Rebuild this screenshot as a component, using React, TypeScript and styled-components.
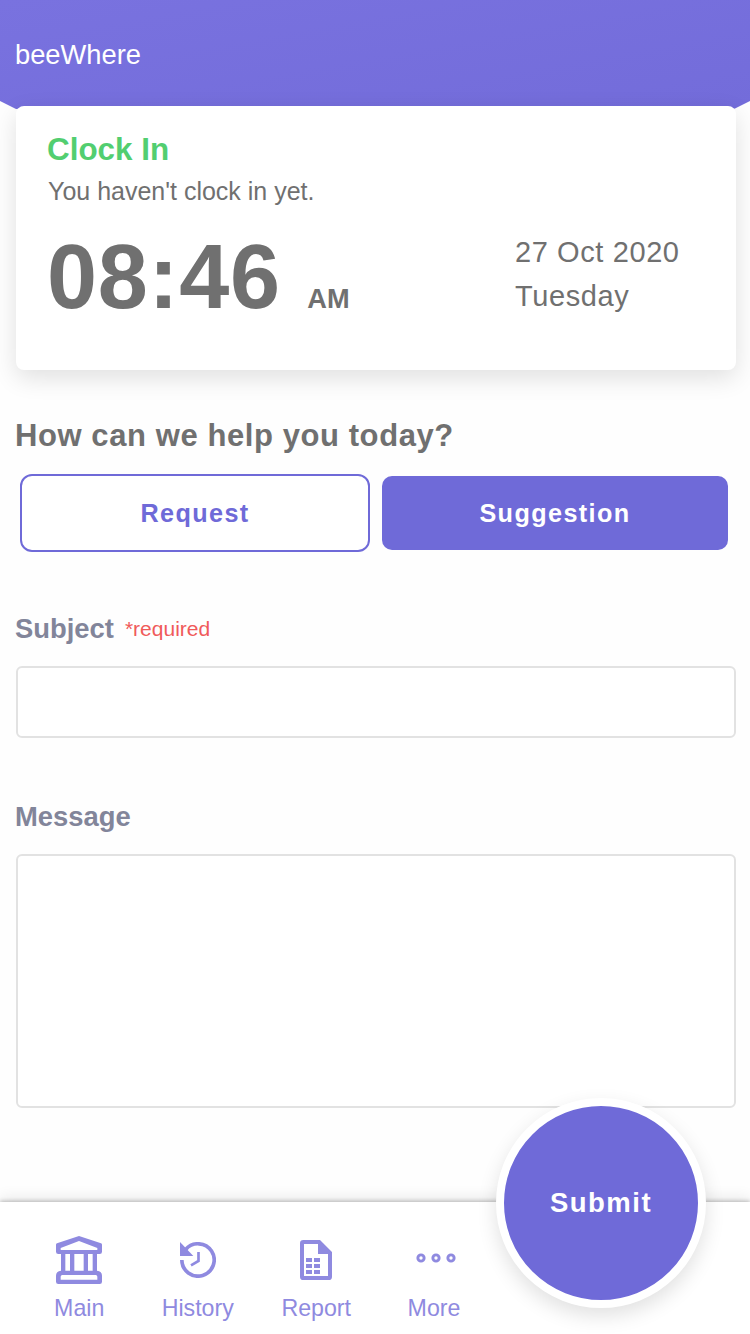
import React from "react";
import styled, { createGlobalStyle } from "styled-components";

const PRIMARY = "#6f6ad8";
const NAV = "#8f8ae0";
const TEXT = "#707070";

const GlobalStyle = createGlobalStyle`
  * { box-sizing: border-box; }
  body {
    margin: 0;
    background: #fefefe;
    font-family: "Liberation Sans", Arial, Helvetica, sans-serif;
    color: ${TEXT};
  }
  button, input, textarea { font-family: inherit; margin: 0; outline: none; }
`;

const Page = styled.div`
  width: 750px;
  height: 1334px;
  display: flex;
  flex-direction: column;
  overflow: hidden;
`;

const Header = styled.header`
  height: 109px;
  flex: none;
  padding: 38px 15px 0;
  background: linear-gradient(170deg, #7972df 0%, #736cda 100%);
  clip-path: polygon(0 0, 100% 0, 100% 101px, 734px 109px, 16px 109px, 0 101px);
`;

const Brand = styled.h1`
  margin: 0;
  font-size: 27.3px;
  line-height: 34px;
  font-weight: 400;
  color: #fff;
`;

const Content = styled.main`
  flex: 1;
  display: flex;
  flex-direction: column;
  padding: 0 14px 0 16px;
`;

const Card = styled.section`
  height: 264px;
  margin-top: -3px;
  padding: 26px 32px 0;
  border-radius: 8px;
  background: #fff;
  box-shadow: 0 8px 24px rgba(0, 0, 0, 0.12);
  z-index: 1;
`;

const Status = styled.h2`
  margin: 0 0 0 -1px;
  font-size: 31.4px;
  line-height: 36px;
  color: #52ce70;
`;

const Hint = styled.p`
  margin: 8px 0 0;
  font-size: 25px;
  line-height: 30px;
`;

const ClockRow = styled.div`
  display: flex;
  justify-content: space-between;
  margin-top: 21px;
`;

const Time = styled.div`
  display: flex;
  align-items: baseline;
  margin-left: -1px;
  font-weight: 700;
  font-size: 90px;
  line-height: 100px;
  letter-spacing: 0.7px;
`;

const Meridiem = styled.span`
  margin-left: 26.5px;
  font-size: 27.2px;
  letter-spacing: 0.2px;
`;

const DateBlock = styled.div`
  width: 189px;
  margin-top: 3px;
  font-size: 29px;
  line-height: 44px;
  letter-spacing: 0.6px;
`;

const Question = styled.h2`
  margin: 48px 0 0 -1px;
  font-size: 31px;
  line-height: 36px;
  letter-spacing: 0.58px;
`;

const Choices = styled.div`
  display: flex;
  align-items: center;
  gap: 12px;
  margin: 20px 8px 0 4px;
`;

const Choice = styled.button<{ $filled?: boolean }>`
  width: ${(p) => (p.$filled ? 346 : 350)}px;
  height: ${(p) => (p.$filled ? 74 : 78)}px;
  padding: 0;
  border: ${(p) => (p.$filled ? "0" : `2px solid ${PRIMARY}`)};
  border-radius: ${(p) => (p.$filled ? 10 : 12)}px;
  background: ${(p) => (p.$filled ? PRIMARY : "#fff")};
  color: ${(p) => (p.$filled ? "#fff" : PRIMARY)};
  font-size: 25.2px;
  font-weight: 700;
  letter-spacing: 1.4px;
`;

const Label = styled.label<{ $top: number }>`
  display: flex;
  align-items: center;
  gap: 11px;
  margin: ${(p) => p.$top}px 0 21px -1px;
  font-size: 27.4px;
  line-height: 32px;
  font-weight: 700;
  color: #82859a;
`;

const Required = styled.span`
  font-size: 21px;
  font-weight: 400;
  color: #f05a5a;
`;

const Subject = styled.input`
  width: 720px;
  height: 72px;
  padding: 0 16px;
  border: 2px solid #e2e2e2;
  border-radius: 6px;
  background: #fff;
  font-size: 27px;
`;

const Message = styled.textarea`
  width: 720px;
  height: 254px;
  padding: 16px;
  border: 2px solid #e2e2e2;
  border-radius: 6px;
  background: #fff;
  font-size: 27px;
  resize: none;
`;

const BottomBar = styled.nav`
  position: relative;
  flex: none;
  height: 132px;
  padding: 32px 0 0 20px;
  display: flex;
  background: #fff;
  box-shadow: 0 -1px 4px rgba(0, 0, 0, 0.24), 0 -4px 14px rgba(0, 0, 0, 0.09);
`;

const Tab = styled.a`
  width: 118.5px;
  display: flex;
  flex-direction: column;
  align-items: center;
  color: ${NAV};
  font-size: 23.2px;
  line-height: 28px;

  &:nth-of-type(4) { width: 117px; }
`;

const IconSlot = styled.span`
  height: 52px;
  margin-bottom: 8px;
  display: flex;
  align-items: center;
  justify-content: center;
  svg { display: block; }
`;

const Submit = styled.button`
  position: absolute;
  right: 44px;
  bottom: 26px;
  width: 210px;
  height: 210px;
  padding: 0;
  border: 8px solid #fff;
  border-radius: 50%;
  background: ${PRIMARY};
  color: #fff;
  font-size: 27.5px;
  font-weight: 700;
  letter-spacing: 1.5px;
  box-shadow: 0 8px 20px rgba(0, 0, 0, 0.12);
`;

const BankIcon = () => (
  <svg width="46" height="48" viewBox="48 33 138 144" fill={NAV}>
    <path
      fillRule="evenodd"
      d="M48 59Q48 56 51 55L117 33L183 55Q186 56 186 59V80Q186 87 179 87H171V137Q186 139 186 152V170Q186 177 179 177H55Q48 177 48 170V152Q48 139 63 137V87H55Q48 87 48 80ZM62 69V75H172V69L117 48ZM76 87V137H90V87ZM103 87V137H131V87ZM144 87V137H158V87ZM62 155V164H172V155Q172 150 167 150H67Q62 150 62 155Z"
    />
  </svg>
);

const HistoryIcon = () => (
  <svg width="36" height="36" viewBox="420 51 108 108">
    <path d="M425.500 105A48.500 48.500 0 1 0 437 73.500" fill="none" stroke={NAV} strokeWidth="11" />
    <path d="M420 51V93H460Z" fill={NAV} />
    <path d="M475.500 81V108L453 121" fill="none" stroke={NAV} strokeWidth="8" />
  </svg>
);

const ReportIcon = () => (
  <svg width="32" height="40" viewBox="120 45 96 120" fill={NAV}>
    <path
      fillRule="evenodd"
      d="M130 45H180L216 81V155Q216 165 206 165H130Q120 165 120 155V55Q120 45 130 45ZM132 57V153H204V87H174V57Z"
    />
    <path d="M138 99h18v12h-18zM162 99h18v12h-18zM138 117h18v12h-18zM162 117h18v12h-18zM138 135h18v12h-18zM162 135h18v12h-18z" />
  </svg>
);

const MoreIcon = () => (
  <svg width="40" height="10" viewBox="0 0 40 10" fill="none" stroke={NAV} strokeWidth="2.900">
    <circle cx="5" cy="5" r="3.150" />
    <circle cx="20" cy="5" r="3.150" />
    <circle cx="35" cy="5" r="3.150" />
  </svg>
);

const MoreSlot = styled(IconSlot)`
  padding: 0 0 4px 4px;
`;

export default function App() {
  return (
    <>
      <GlobalStyle />
      <Page>
        <Header>
          <Brand>beeWhere</Brand>
        </Header>
        <Content>
          <Card>
            <Status>Clock In</Status>
            <Hint>You haven't clock in yet.</Hint>
            <ClockRow>
              <Time>
                08:46<Meridiem>AM</Meridiem>
              </Time>
              <DateBlock>
                <div>27 Oct 2020</div>
                <div>Tuesday</div>
              </DateBlock>
            </ClockRow>
          </Card>
          <Question>How can we help you today?</Question>
          <Choices>
            <Choice>Request</Choice>
            <Choice $filled>Suggestion</Choice>
          </Choices>
          <Label $top={61} htmlFor="subject">
            Subject <Required>*required</Required>
          </Label>
          <Subject id="subject" />
          <Label $top={63} htmlFor="message">
            Message
          </Label>
          <Message id="message" />
        </Content>
        <BottomBar>
          <Tab>
            <IconSlot><BankIcon /></IconSlot>
            Main
          </Tab>
          <Tab>
            <IconSlot><HistoryIcon /></IconSlot>
            History
          </Tab>
          <Tab>
            <IconSlot><ReportIcon /></IconSlot>
            Report
          </Tab>
          <Tab>
            <MoreSlot><MoreIcon /></MoreSlot>
            More
          </Tab>
          <Submit>Submit</Submit>
        </BottomBar>
      </Page>
    </>
  );
}
